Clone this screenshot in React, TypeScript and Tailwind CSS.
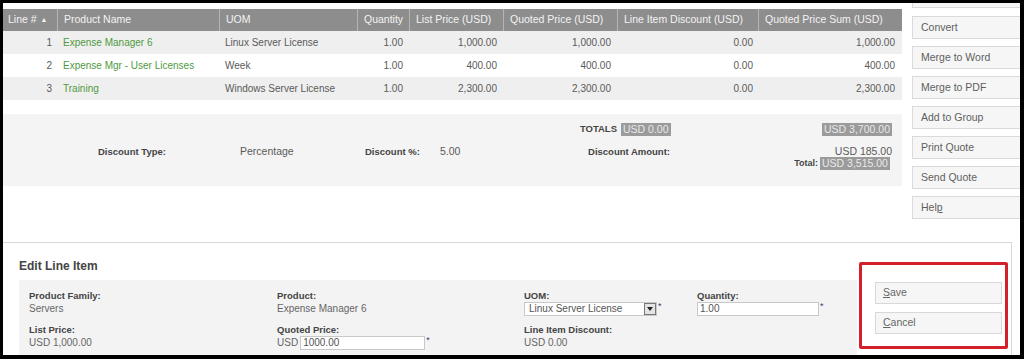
import React from "react";

const cols = "grid grid-cols-[54px_162px_138px_52px_94px_114px_141px_144px]";

const rows = [
  { n: "1", name: "Expense Manager 6", uom: "Linux Server License", q: "1.00", lp: "1,000.00", qp: "1,000.00", d: "0.00", s: "1,000.00", bg: "bg-[#efefef]" },
  { n: "2", name: "Expense Mgr - User Licenses", uom: "Week", q: "1.00", lp: "400.00", qp: "400.00", d: "0.00", s: "400.00", bg: "bg-white" },
  { n: "3", name: "Training", uom: "Windows Server License", q: "1.00", lp: "2,300.00", qp: "2,300.00", d: "0.00", s: "2,300.00", bg: "bg-[#efefef]" },
];

const headers = [
  "Product Name",
  "UOM",
  "Quantity",
  "List Price (USD)",
  "Quoted Price (USD)",
  "Line Item Discount (USD)",
  "Quoted Price Sum (USD)",
];

function SideButton({ children }: { children: React.ReactNode }) {
  return (
    <div className="h-[23px] border border-r-0 border-[#dadada] bg-[#f6f6f6] pl-[8px] flex items-center text-[10.5px] text-[#5f5f5f]">
      {children}
    </div>
  );
}

function GrayBox({ children }: { children: React.ReactNode }) {
  return (
    <span className="inline-block bg-[#9b9b9b] text-[#e9e9e9] leading-[13px] h-[13px] px-[2px] text-[10.5px]">
      {children}
    </span>
  );
}

function Star() {
  return <span className="text-[#3a3a70] text-[9px] leading-[9px] self-start ml-[1px]">*</span>;
}

export default function App() {
  return (
    <div className="w-[1024px] h-[359px] bg-black pt-[3px] pl-[3px] pr-[4px] pb-[4px] font-['Liberation_Sans',Arial,sans-serif]">
      <div className="relative h-full bg-white overflow-hidden flex flex-col">
        {/* Top section */}
        <div className="flex h-[239px] shrink-0">
          <div className="w-[899px] pt-[6px]">
            {/* header */}
            <div className={`${cols} h-[22px] bg-[#8d8d8d] text-[#f3f3f3] text-[10.5px]`}>
              <div className="flex items-center pl-[5px]">
                Line #<span className="ml-[4px] text-[7px]">▲</span>
              </div>
              {headers.map((h) => (
                <div key={h} className="flex items-center pl-[6px] border-l border-[#b4b4b4]">
                  {h}
                </div>
              ))}
            </div>
            {rows.map((r) => (
              <div key={r.n} className={`${cols} h-[23px] ${r.bg} text-[10px] text-[#5a5a5a] items-center`}>
                <div className="text-right pr-[5px]">{r.n}</div>
                <div className="pl-[6px] text-[#4f9a3e]">{r.name}</div>
                <div className="pl-[6px]">{r.uom}</div>
                <div className="text-right pr-[6px]">{r.q}</div>
                <div className="text-right pr-[6px]">{r.lp}</div>
                <div className="text-right pr-[6px]">{r.qp}</div>
                <div className="text-right pr-[5px]">{r.d}</div>
                <div className="text-right pr-[7px]">{r.s}</div>
              </div>
            ))}
            {/* totals */}
            <div className="mt-[14px] h-[72px] bg-[#f4f4f4] pt-[9px] text-[10px] text-[#5a5a5a]">
              <div className="flex h-[13px] items-center">
                <div className="w-[614px] text-right font-bold text-[9.5px] text-[#444]">TOTALS</div>
                <div className="ml-[4px] w-[50px]">
                  <GrayBox>USD 0.00</GrayBox>
                </div>
                <div className="w-[151px]" />
                <div className="w-[70px] text-right">
                  <GrayBox>USD 3,700.00</GrayBox>
                </div>
              </div>
              <div className="mt-[8px] h-[13px] grid grid-cols-[95px_142px_125px_75px_80px_150px_222px] items-center">
                <div />
                <div className="font-bold text-[9.5px] text-[#444]">Discount Type:</div>
                <div className="text-[10.5px]">Percentage</div>
                <div className="font-bold text-[9.5px] text-[#444]">Discount %:</div>
                <div className="text-[10.5px]">5.00</div>
                <div className="text-right font-bold text-[9.5px] text-[#444]">Discount Amount:</div>
                <div className="text-right text-[10.5px]">USD 185.00</div>
              </div>
              <div className="h-[13px] flex items-center">
                <div className="w-[817px] text-right font-bold text-[9px] text-[#444] pr-[2px]">Total:</div>
                <GrayBox>USD 3,515.00</GrayBox>
              </div>
            </div>
          </div>
          {/* right buttons */}
          <div className="ml-[10px] flex-1 flex flex-col">
            <div className="h-[5px] border border-t-0 border-r-0 border-[#dadada] bg-[#f6f6f6]" />
            <div className="mt-[8px] flex flex-col gap-[7px]">
              <SideButton>Convert</SideButton>
              <SideButton>Merge to Word</SideButton>
              <SideButton>Merge to PDF</SideButton>
              <SideButton>Add to Group</SideButton>
              <SideButton>Print Quote</SideButton>
              <SideButton>Send Quote</SideButton>
              <SideButton>
                Hel<u>p</u>
              </SideButton>
            </div>
          </div>
        </div>

        {/* Edit Line Item panel */}
        <div className="w-[1009px] flex-1 border-t border-r border-[#d8d8d8] flex">
          <div className="w-[854px] pl-[16px] flex flex-col">
            <div className="mt-[16px] h-[14px] leading-[14px] text-[12px] font-bold text-[#444]">Edit Line Item</div>
            <div className="mt-[7px] flex-1 bg-[#f3f3f3] pl-[10px] pt-[9px] text-[10px] text-[#666]">
              <div className="grid grid-cols-[248px_247px_173px_1fr]">
                {/* Row 1 */}
                <div className="flex flex-col">
                  <div className="h-[13px] leading-[13px] font-bold text-[9.5px] text-[#444]">Product Family:</div>
                  <div className="h-[14px] leading-[14px]">Servers</div>
                </div>
                <div className="flex flex-col">
                  <div className="h-[13px] leading-[13px] font-bold text-[9.5px] text-[#444]">Product:</div>
                  <div className="h-[14px] leading-[14px]">Expense Manager 6</div>
                </div>
                <div className="flex flex-col">
                  <div className="h-[13px] leading-[13px] font-bold text-[9.5px] text-[#444]">UOM:</div>
                  <div className="h-[14px] flex">
                    <div className="w-[133px] h-[14px] border border-[#c8c8c8] bg-white flex items-center justify-between">
                      <span className="pl-[4px] text-[10px] leading-[12px] text-[#555]">Linux Server License</span>
                      <span className="w-[12px] h-[12px] border border-[#777] bg-[#e4e4e4] flex items-center justify-center">
                        <svg width="6" height="4" viewBox="0 0 6 4">
                          <path d="M0 0 L6 0 L3 4 Z" fill="#222" />
                        </svg>
                      </span>
                    </div>
                    <Star />
                  </div>
                </div>
                <div className="flex flex-col">
                  <div className="h-[13px] leading-[13px] font-bold text-[9.5px] text-[#444]">Quantity:</div>
                  <div className="h-[14px] flex">
                    <div className="w-[122px] h-[14px] border border-[#c8c8c8] bg-white pl-[2px] leading-[12px] text-[#555]">1.00</div>
                    <Star />
                  </div>
                </div>
                {/* Row 2 */}
                <div className="flex flex-col mt-[7px]">
                  <div className="h-[13px] leading-[13px] font-bold text-[9.5px] text-[#444]">List Price:</div>
                  <div className="h-[14px] leading-[14px]">USD 1,000.00</div>
                </div>
                <div className="flex flex-col mt-[7px]">
                  <div className="h-[13px] leading-[13px] font-bold text-[9.5px] text-[#444]">Quoted Price:</div>
                  <div className="h-[14px] flex items-center">
                    <span className="mr-[2px] leading-[14px]">USD</span>
                    <div className="w-[125px] h-[14px] border border-[#c8c8c8] bg-white pl-[2px] leading-[12px] text-[#555]">1000.00</div>
                    <Star />
                  </div>
                </div>
                <div className="flex flex-col mt-[7px]">
                  <div className="h-[13px] leading-[13px] font-bold text-[9.5px] text-[#444]">Line Item Discount:</div>
                  <div className="h-[14px] leading-[14px]">USD 0.00</div>
                </div>
                <div />
              </div>
            </div>
          </div>
          <div className="ml-[18px] w-[127px] pt-[39px] flex flex-col gap-[8px]">
            <div className="h-[22px] border border-[#d8d8d8] bg-[#f6f6f6] pl-[7px] flex items-center text-[10.5px] text-[#666]">
              <u>S</u>ave
            </div>
            <div className="h-[22px] border border-[#d8d8d8] bg-[#f6f6f6] pl-[7px] flex items-center text-[10.5px] text-[#666]">
              <u>C</u>ancel
            </div>
          </div>
        </div>

        {/* red annotation box */}
        <div className="absolute left-[856px] top-[259px] w-[149px] h-[87px] border-[3px] border-[#d3202b] rounded-[2px] pointer-events-none" />
      </div>
    </div>
  );
}
